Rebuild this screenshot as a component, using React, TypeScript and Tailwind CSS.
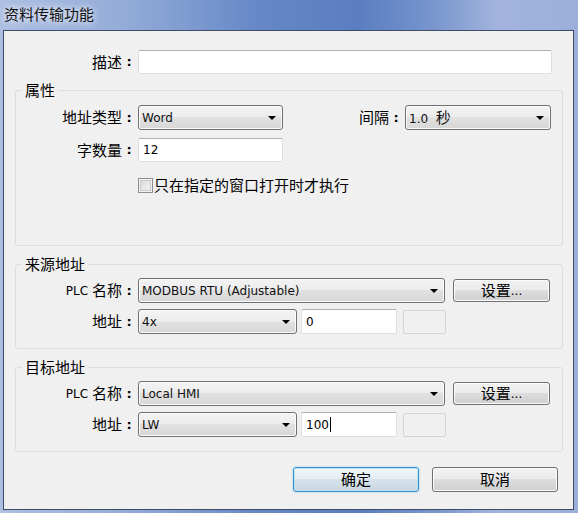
import React from "react";

const zh = "font-['Noto_Sans_CJK_SC',sans-serif] text-[15px]";

const Zh = ({ children }: { children: React.ReactNode }) => <span className={zh}>{children}</span>;

// right-aligned field label with a centred colon, same as the old win dialogs
const FieldLabel = ({ w, children }: { w: string; children: React.ReactNode }) => (
  <div className={`${w} flex shrink-0 items-center justify-end whitespace-nowrap pr-[2px] text-[#000]`}>
    {children}
    <span className="inline-block w-[14px] text-center text-[13px] font-bold">:</span>
  </div>
);

const Arrow = () => (
  <svg width="8" height="4" viewBox="0 0 8 4" className="shrink-0">
    <path d="M0 0H8L4 4Z" fill="#000" />
  </svg>
);

const Combo = ({ w, children }: { w: string; children: React.ReactNode }) => (
  <div
    className={`${w} flex h-[25px] shrink-0 items-center justify-between rounded-[3px] border border-[#707070] bg-[linear-gradient(#f3f3f3_0%,#ececec_50%,#e1e1e1_50%,#d7d7d7_100%)] pl-[3px] pr-[6px] text-[#111] shadow-[inset_0_0_0_1px_#fbfbfb]`}
  >
    <span className="whitespace-nowrap">{children}</span>
    <Arrow />
  </div>
);

const TextBox = ({ w, h = "h-[24px]", children }: { w: string; h?: string; children?: React.ReactNode }) => (
  <div
    className={`${w} ${h} flex shrink-0 items-center rounded-[2px] border border-[#dbdfe6] border-t-[#abadb3] bg-white pl-[4px] text-[#000]`}
  >
    {children}
  </div>
);

const WinButton = ({ w, h, children, primary }: { w: string; h: string; children: React.ReactNode; primary?: boolean }) => (
  <div
    className={
      primary
        ? `${w} ${h} flex shrink-0 items-center justify-center rounded-[3px] border border-[#3c8fd0] bg-[linear-gradient(#f2f7fa_0%,#e4edf3_50%,#d6e2ea_50%,#cbd8e2_100%)] shadow-[inset_0_0_0_1px_#b9e3f8,0_0_2px_#7fc9ef] text-[#000]`
        : `${w} ${h} flex shrink-0 items-center justify-center rounded-[3px] border border-[#707070] bg-[linear-gradient(#f2f2f2_0%,#ebebeb_50%,#dddddd_50%,#cfcfcf_100%)] shadow-[inset_0_0_0_1px_#fcfcfc] text-[#000]`
    }
  >
    {children}
  </div>
);

const Group = ({ title, h, children }: { title: string; h: string; children: React.ReactNode }) => (
  <fieldset className={`${h} ml-[11px] w-[548px] rounded-[3px] border border-[#d5dfe5]`}>
    <legend className={`ml-[6px] px-[3px] leading-[20px] text-[#000] ${zh}`}>{title}</legend>
    {children}
  </fieldset>
);

const PlcRows = ({ plc, area, addr, caret }: { plc: string; area: string; addr: string; caret?: boolean }) => (
  <div className="flex flex-col gap-[6px] pt-[4px]">
    <div className="flex items-center">
      <FieldLabel w="w-[122px]">
        <span className="text-[12px]">PLC&nbsp;</span>
        <Zh>名称</Zh>
      </FieldLabel>
      <Combo w="w-[307px]">{plc}</Combo>
      <div className="ml-[8px]">
        <WinButton w="w-[97px]" h="h-[23px]">
          <Zh>设置</Zh>
          <span>...</span>
        </WinButton>
      </div>
    </div>
    <div className="flex items-center">
      <FieldLabel w="w-[122px]">
        <Zh>地址</Zh>
      </FieldLabel>
      <Combo w="w-[159px]">{area}</Combo>
      <div className="ml-[4px]">
        <TextBox w="w-[96px]" h="h-[25px]">
          {addr}
          {caret && <span className="ml-[1px] h-[15px] w-[1px] bg-black" />}
        </TextBox>
      </div>
      <div className="ml-[6px] h-[24px] w-[43px] rounded-[2px] border border-[#d4d4d4] bg-[#f0f0f0]" />
    </div>
  </div>
);

export default function App() {
  return (
    <div className="h-[513px] w-[578px] overflow-hidden bg-[linear-gradient(90deg,#adbfe2_0%,#93abd8_22%,#6587c6_45%,#5a7ec1_62%,#7895cd_75%,#a2b4dd_86%,#9cafda_100%)] font-['DejaVu_Sans','Noto_Sans_CJK_SC',sans-serif] text-[12px]">
      {/* title bar */}
      <div className="flex h-[30px] items-center pl-[4px] pb-[2px]">
        <span className={`${zh} text-[#101010] [text-shadow:0_0_6px_rgba(255,255,255,0.9),0_0_10px_rgba(255,255,255,0.6)]`}>
          资料传输功能
        </span>
      </div>

      {/* client area */}
      <div className="ml-[3px] h-[480px] w-[571px] border border-[#3f4c66] bg-[#f0f0f0]">
        <div className="mt-[19px] flex items-center">
          <FieldLabel w="w-[134px]">
            <Zh>描述</Zh>
          </FieldLabel>
          <TextBox w="w-[414px]" />
        </div>

        <div className="mt-[6px]">
          <Group title="属性" h="h-[166px]">
            <div className="pt-[5px]">
              <div className="flex items-center pr-[11px]">
                <FieldLabel w="w-[122px]">
                  <Zh>地址类型</Zh>
                </FieldLabel>
                <Combo w="w-[145px]">Word</Combo>
                <div className="ml-auto flex items-center">
                  <FieldLabel w="w-auto">
                    <Zh>间隔</Zh>
                  </FieldLabel>
                  <Combo w="w-[146px]">
                    1.0&nbsp;&nbsp;<Zh>秒</Zh>
                  </Combo>
                </div>
              </div>
              <div className="mt-[8px] flex items-center">
                <FieldLabel w="w-[122px]">
                  <Zh>字数量</Zh>
                </FieldLabel>
                <TextBox w="w-[145px]">12</TextBox>
              </div>
              <div className="mt-[13px] flex h-[20px] items-center pl-[122px]">
                <div className="h-[15px] w-[15px] border border-[#8e8f8f] bg-[linear-gradient(135deg,#d8d8d8,#f7f7f7)] shadow-[inset_0_0_0_1px_#f4f4f4,inset_0_0_0_2px_#c9c9c9]" />
                <span className={`ml-[1px] ${zh}`}>只在指定的窗口打开时才执行</span>
              </div>
            </div>
          </Group>
        </div>

        <div className="mt-[8px]">
          <Group title="来源地址" h="h-[95px]">
            <PlcRows plc="MODBUS RTU (Adjustable)" area="4x" addr="0" />
          </Group>
        </div>

        <div className="mt-[8px]">
          <Group title="目标地址" h="h-[95px]">
            <PlcRows plc="Local HMI" area="LW" addr="100" caret />
          </Group>
        </div>

        <div className="mt-[15px] flex justify-end gap-[13px] pr-[15px]">
          <WinButton w="w-[126px]" h="h-[25px]" primary>
            <Zh>确定</Zh>
          </WinButton>
          <WinButton w="w-[126px]" h="h-[25px]">
            <Zh>取消</Zh>
          </WinButton>
        </div>
      </div>
    </div>
  );
}
